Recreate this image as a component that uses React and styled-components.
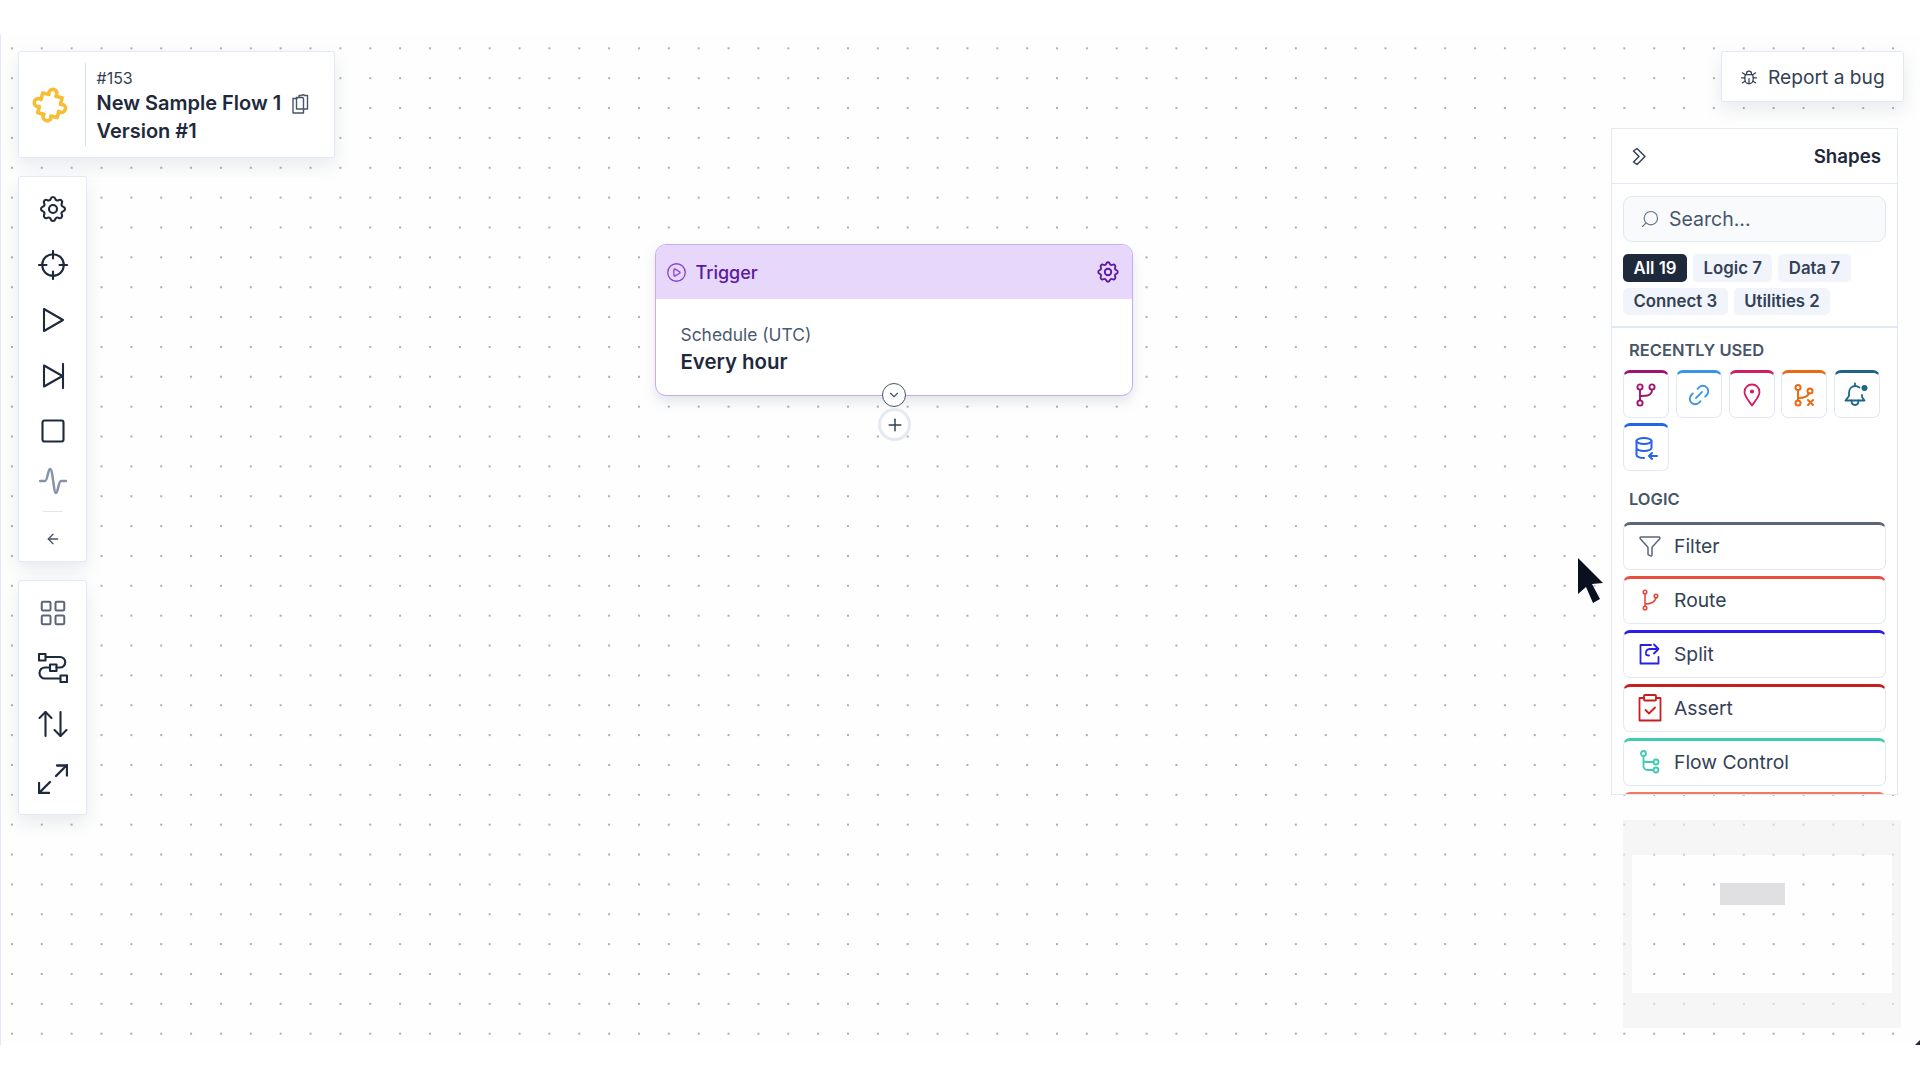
import React from "react";
import styled, { createGlobalStyle } from "styled-components";
import { ArrowLeft, LayoutGrid, ArrowUpDown, CirclePlay, ChevronDown, Plus, Search, Link2, Filter } from "lucide-react";
import { TbSettings, TbBug } from "react-icons/tb";

const Global = createGlobalStyle`
  html, body { margin: 0; padding: 0; background: #fff; width: 1920px; height: 1080px; overflow: hidden; }
  * { box-sizing: border-box; }
  body { font-family: "Inter", "Noto Sans", sans-serif; color: #1e293b; }
`;

const Canvas = styled.div`
  position: relative;
  margin-top: 34px;
  width: 1920px;
  height: 1011px;
  border-left: 1.5px solid #e2e8f5;
  background-color: #fefefe;
  background-image: radial-gradient(circle, #8f96a3 0.6px, transparent 1.05px);
  background-size: 29.87px 29.87px;
  background-position: -4px -0.6px;
  display: flex;
  justify-content: space-between;
  padding: 17px 16px 0 16.5px;
`;
const LeftColumn = styled.div`
  display: flex;
  flex-direction: column;
  align-items: flex-start;
  gap: 18px;
`;
const Card = styled.div`
  background: #fff;
  border: 1.5px solid #e2e8f5;
  border-radius: 3px;
  box-shadow: 0 8px 18px rgba(100, 116, 139, 0.14);
`;
const FlowCard = styled(Card)`
  width: 317px;
  height: 107px;
  display: flex;
  align-items: center;
  padding-left: 11px;
`;
const LogoSlot = styled.div`
  width: 56px;
  height: 83px;
  border-right: 1.5px solid #d5deec;
  display: flex;
  align-items: center;
`;
const FlowText = styled.div`
  margin: 2px 0 0 11px;
  display: flex;
  flex-direction: column;
`;
const FlowNumber = styled.div`
  font-size: 16px;
  line-height: 24px;
  color: #334155;
`;
const FlowName = styled.div`
  font-size: 20px;
  line-height: 27.5px;
  font-weight: 600;
  color: #1e293b;
  display: flex;
  align-items: center;
  gap: 11px;
`;
const Toolbar = styled(Card)`
  width: 69px;
  display: flex;
  flex-direction: column;
  align-items: center;
  padding: ${(p) => p.$pad};
`;
const Tool = styled.div`
  height: ${(p) => p.$h || 55.5}px;
  flex: none;
  display: flex;
  align-items: center;
  justify-content: center;
  color: ${(p) => p.$color || "#1e293b"};
`;
const ToolRule = styled.div`
  width: 20px;
  height: 1px;
  background: #e0e5ee;
  margin: 7px 0 11px;
`;

const RightColumn = styled.div`
  width: 290px;
  display: flex;
  flex-direction: column;
  align-items: flex-end;
`;
const BugButton = styled(Card)`
  width: 183px;
  height: 51px;
  display: flex;
  align-items: center;
  gap: 9.5px;
  padding-left: 16.5px;
  font-size: 19.2px;
  color: #334155;
`;
const Panel = styled.aside`
  margin-top: 26px;
  margin-right: 6px;
  width: 287px;
  height: 667px;
  background: #fff;
  border: 1.5px solid #e2e8f5;
  overflow: hidden;
`;
const PanelHead = styled.div`
  height: 55px;
  border-bottom: 1.5px solid #e2e8f5;
  display: flex;
  align-items: center;
  justify-content: space-between;
  padding: 0 16px 0 20px;
  font-size: 18.7px;
  font-weight: 600;
`;
const PanelSection = styled.div`
  padding: 12px 11px 0;
`;
const SearchBox = styled.div`
  height: 46px;
  width: 263px;
  border: 1.5px solid #e2e8f0;
  border-radius: 9px;
  background: #f8fafc;
  display: flex;
  align-items: center;
  gap: 9px;
  padding-left: 16px;
  font-size: 19.5px;
  color: #475569;
`;
const Chips = styled.div`
  display: flex;
  flex-wrap: wrap;
  gap: 6px;
  padding: 12px 0 11px;
`;
const Chip = styled.div`
  height: 27.5px;
  padding: 0 ${(p) => p.$pad}px;
  display: flex;
  align-items: center;
  border-radius: 5px;
  font-size: 16.8px;
  font-weight: 600;
  background: ${(p) => (p.$active ? "#1e293b" : "#f1f5fb")};
  color: ${(p) => (p.$active ? "#fff" : "#334155")};
`;
const Rule = styled.div`
  height: 1.5px;
  background: #e2e8f5;
`;
const SectionTitle = styled.div`
  font-size: 16.5px;
  font-weight: 600;
  color: #475569;
  padding-left: 6px;
  line-height: 20px;
`;
const Tiles = styled.div`
  display: flex;
  flex-wrap: wrap;
  gap: 5px 6.8px;
  margin-top: 10px;
  margin-bottom: 18.5px;
`;
const Tile = styled.div`
  width: 46px;
  height: 48px;
  border: 1.5px solid #e2e8f5;
  border-top: 3px solid ${(p) => p.$color};
  border-radius: 7px;
  color: ${(p) => p.$color};
  display: flex;
  align-items: center;
  justify-content: center;
`;
const ShapeList = styled.div`
  display: flex;
  flex-direction: column;
  gap: 6px;
  margin-top: 12.5px;
`;
const ShapeRow = styled.div`
  height: 48px;
  flex: none;
  border: 1.5px solid #e2e8f5;
  border-top: 3px solid ${(p) => p.$color};
  border-radius: 7px;
  display: flex;
  align-items: center;
  gap: 12px;
  padding: 0 0 2px 14px;
  font-size: 19.3px;
  color: #334155;
`;
const ShapeIcon = styled.span`
  width: 24px;
  height: 24px;
  display: flex;
  align-items: center;
  justify-content: center;
  color: ${(p) => p.$color};
`;
const MiniMap = styled.div`
  margin-top: 25px;
  margin-right: 3px;
  width: 278px;
  height: 208px;
  border-style: solid;
  border-width: 35px 9px 35px 9px;
  border-color: rgba(240, 240, 240, 0.62);
  display: flex;
  padding: 28px 0 0 88px;
`;
const MiniNode = styled.div`
  width: 65px;
  height: 22px;
  background: #e0e0e3;
`;
const Node = styled.div`
  position: absolute;
  left: 654px;
  top: 210px;
  width: 477.5px;
  height: 152px;
  background: #fff;
  border: 1.5px solid #c9a9f2;
  border-radius: 11px;
  box-shadow: 0 6px 12px rgba(100, 116, 139, 0.18);
`;
const NodeHead = styled.div`
  height: 54px;
  background: #e6d7fb;
  border-radius: 10px 10px 0 0;
  display: flex;
  align-items: center;
  padding: 0 11px 0 9.5px;
  color: #5b1a9e;
  font-size: 18px;
  font-weight: 500;
  gap: 9px;
`;
const NodeTitle = styled.span`
  flex: 1;
`;
const NodeBody = styled.div`
  padding: 23px 0 0 24.5px;
`;
const NodeLabel = styled.div`
  font-size: 17.4px;
  line-height: 26px;
  color: #4b5a70;
`;
const NodeValue = styled.div`
  font-size: 20.4px;
  line-height: 28px;
  font-weight: 600;
  color: #1e293b;
`;
const Collapse = styled.div`
  position: absolute;
  left: 226px;
  top: 137.5px;
  width: 24px;
  height: 24px;
  border-radius: 50%;
  background: #fff;
  border: 1.5px solid #475569;
  display: flex;
  align-items: center;
  justify-content: center;
  color: #475569;
`;
const AddButton = styled.div`
  position: absolute;
  left: 222px;
  top: 163px;
  width: 33px;
  height: 33px;
  border-radius: 50%;
  background: #fff;
  border: 3px solid #e7e9f1;
  display: flex;
  align-items: center;
  justify-content: center;
  color: #334155;
`;
const Pointer = styled.svg`
  position: absolute;
  left: 1575.5px;
  top: 524px;
`;
const Corner = styled.div`
  position: absolute;
  right: 0;
  bottom: 0;
  width: 5px;
  height: 5px;
  background: #1e293b;
  clip-path: polygon(100% 0, 100% 100%, 0 100%);
`;

const Icon = ({ w, h, sw = 2.1, color = "currentColor", children }) => (
  <svg width={w} height={h} viewBox={`0 0 ${w} ${h}`} fill="none" stroke={color} strokeWidth={sw} strokeLinecap="round" strokeLinejoin="round">
    {children}
  </svg>
);

const Puzzle = () => (
  <svg width="40" height="40" viewBox="0 0 40 40" fill="none" stroke="#f7bd35" strokeWidth="3.6" strokeLinejoin="round">
    <g transform="rotate(14 20 20)">
      <path d="M10 10h6.500c-1.500-3 .5-6 3.500-6s5 3 3.500 6H30v7c3-1.500 6 .5 6 3.500s-3 5-6 3.500v6.500h-6.500c1.500 3-.5 5.500-3.500 5.500s-5-2.500-3.500-5.500H10v-6.500c-3 1.500-6-.5-6-3.500s3-5 6-3.500z" />
    </g>
  </svg>
);
const CopyIcon = () => (
  <Icon w={17} h={20} sw={1.4} color="#475569">
    <path d="M5 4.500H1v14.500h10.500v-4" />
    <path d="M7 3.500V1.500h2.500a2 2 0 0 1 3 0h3v13.500h-4" />
    <path d="M4.500 6.500V3.500h6c.8 0 1 .5 1 1v10.500H4.500z" />
  </Icon>
);
const CrosshairIcon = () => (
  <Icon w={30} h={30}>
    <circle cx="15" cy="15" r="10.800" />
    <path d="M15 1v7.500M15 21.500V29M1 15h7.500M21.500 15H29" />
  </Icon>
);
const PlayIcon = () => (
  <Icon w={24} h={26}>
    <path d="M3 2l19 11L3 24z" />
  </Icon>
);
const SkipIcon = () => (
  <Icon w={24} h={26}>
    <path d="M3 2.500L21.500 13 3 23.500zM22 1v24" />
  </Icon>
);
const SquareIcon = () => (
  <Icon w={24} h={24}>
    <rect x="1.500" y="1.500" width="21" height="21" rx="2" />
  </Icon>
);
const ActivityIcon = () => (
  <Icon w={28} h={28} sw={2.5}>
    <path d="M1 14h5c2.500 0 3-12 5-12 3 0 3.500 24 6 24 2 0 2.500-12 5-12h5" />
  </Icon>
);
const RouteMapIcon = () => (
  <Icon w={30} h={30}>
    <rect x="1" y="1" width="6.500" height="6.500" />
    <rect x="12" y="11.500" width="6.500" height="6.500" />
    <rect x="22.500" y="22.500" width="6.500" height="6.500" />
    <path d="M8 4h14a5 5 0 0 1 0 10.500h-3.500M12 14.500H7a5.500 5.500 0 0 0 0 11h15" />
  </Icon>
);
const ResizeIcon = () => (
  <Icon w={30} h={30} sw={2.3}>
    <path d="M18 12L29 1M19 1.500h10v10M12 18L1 29M1 19v10h10" />
  </Icon>
);
const CollapseChevrons = () => (
  <Icon w={14} h={19} sw={1.5} color="#334155">
    <path d="M5 1.500l8 8-8 8-3.500-2.500L7 9.500 1.500 4z" />
  </Icon>
);
const ForkIcon = ({ color }) => (
  <Icon w={24} h={24} color={color} sw={1.9}>
    <circle cx="6" cy="4" r="2.600" /><circle cx="18" cy="4" r="2.600" /><circle cx="6" cy="20" r="2.600" />
    <path d="M6 6.600v10.800M18 6.600c0 6.400-5 6.400-12 6.400" />
  </Icon>
);
const PinIcon = ({ color }) => (
  <Icon w={20} h={24} color={color} sw={1.8}>
    <path d="M10 22.500C7 18 2.500 13.500 2.500 9a7.500 7.500 0 0 1 15 0c0 4.500-4.500 9-7.500 13.500z" />
    <circle cx="10" cy="8.500" r="1.200" fill={color} />
  </Icon>
);
const ForkX = ({ color }) => (
  <Icon w={24} h={24} color={color} sw={2}>
    <circle cx="6" cy="4.500" r="2.500" /><circle cx="6" cy="20" r="2.500" /><circle cx="18" cy="8" r="2.500" />
    <path d="M6 7v10.500M6 15c6 0 10-1 11-5M16 17l5 5M21 17l-5 5" />
  </Icon>
);
const BellMark = ({ color }) => (
  <Icon w={26} h={26} color={color} sw={1.8}>
    <path d="M11 1.500v2.500M15.500 5.500C14 4.500 12.500 4 11 4 7 4 5 7.500 5 11v3l-3.500 4.500h19L18 15v-2" />
    <path d="M7.500 18.500c0 6 7 6 7 0" />
    <circle cx="20.500" cy="6" r="3" fill={color} stroke="none" />
  </Icon>
);
const DbIn = ({ color }) => (
  <Icon w={24} h={24} color={color} sw={2}>
    <ellipse cx="10" cy="5" rx="7.500" ry="3" />
    <path d="M2.500 5v14c0 1.500 3 3 7.500 3M17.500 5v7M2.500 12c0 1.700 3.500 3 7.500 3s7.500-1.300 7.500-3M23 20h-8M18 17l-3 3 3 3" />
  </Icon>
);
const RouteIcon = ({ color }) => (
  <Icon w={18} h={22} color={color} sw={1.5}>
    <circle cx="4" cy="3" r="1.800" /><circle cx="4" cy="19" r="1.800" /><circle cx="15" cy="7" r="1.800" />
    <path d="M4 5v12M4 15c6 0 10-2 11-6" />
  </Icon>
);
const SplitIcon = ({ color }) => (
  <Icon w={22} h={22} color={color} sw={1.8}>
    <path d="M12 2H1.500v18.500h18V14M15 1.500l4.500 4.500-4.500 4.500M19 6h-8c-3 0-4.500 2-4 5 .2 1 1 1.500 3 1.500" />
  </Icon>
);
const AssertIcon = ({ color }) => (
  <Icon w={24} h={28} color={color} sw={1.8}>
    <path d="M6 4H1.500v22.500h21V4H18" /><rect x="6" y="1" width="12" height="5.500" rx="1" />
    <path d="M7.500 16l3.500 3.500 6-6" />
  </Icon>
);
const FlowControlIcon = ({ color }) => (
  <Icon w={20} h={24} color={color} sw={1.8}>
    <circle cx="3.500" cy="3.500" r="2.500" /><circle cx="16" cy="12" r="2.500" /><circle cx="16" cy="20" r="2.500" />
    <path d="M3.500 6v10c0 2.500 2 4 4 4h6M3.500 10c0 1.500 1.500 2 3 2h7" />
  </Icon>
);

const recent = [
  ["#a0146e", <ForkIcon color="#a0146e" />],
  ["#3b94e8", <Link2 size={26} strokeWidth={1.7} style={{ transform: "rotate(-45deg)" }} />],
  ["#cf1f63", <PinIcon color="#cf1f63" />],
  ["#ea6a13", <ForkX color="#ea6a13" />],
  ["#1d6585", <BellMark color="#1d6585" />],
  ["#2563eb", <DbIn color="#2563eb" />],
];
const shapes = [
  ["Filter", "#5b6579", <Filter size={24} strokeWidth={1.5} />],
  ["Route", "#ea4f3e", <RouteIcon color="#e2453a" />],
  ["Split", "#2a1ee8", <SplitIcon color="#2a1ee8" />],
  ["Assert", "#c81e1e", <AssertIcon color="#c81e1e" />],
  ["Flow Control", "#3fcbb0", <FlowControlIcon color="#3fcbb0" />],
  ["", "#ef7c5d", null],
];

export default function App() {
  return (
    <>
      <Global />
      <Canvas>
        <LeftColumn>
          <FlowCard>
            <LogoSlot><Puzzle /></LogoSlot>
            <FlowText>
              <FlowNumber>#153</FlowNumber>
              <FlowName>New Sample Flow 1 <CopyIcon /></FlowName>
              <FlowName>Version #1</FlowName>
            </FlowText>
          </FlowCard>
          <Toolbar $pad="4.5px 0 6.500px 1px">
            <Tool><TbSettings size={32} strokeWidth={1.6} /></Tool>
            <Tool><CrosshairIcon /></Tool>
            <Tool><PlayIcon /></Tool>
            <Tool><SkipIcon /></Tool>
            <Tool><SquareIcon /></Tool>
            <Tool $h={44.5} $color="#8493a8"><ActivityIcon /></Tool>
            <ToolRule />
            <Tool $h={32} $color="#475569"><ArrowLeft size={16} strokeWidth={2} /></Tool>
          </Toolbar>
          <Toolbar $pad="4px 0 7px 1px">
            <Tool $color="#5b6579"><LayoutGrid size={30} strokeWidth={1.6} /></Tool>
            <Tool><RouteMapIcon /></Tool>
            <Tool><ArrowUpDown size={36} strokeWidth={1.4} /></Tool>
            <Tool><ResizeIcon /></Tool>
          </Toolbar>
        </LeftColumn>
        <RightColumn>
          <BugButton><TbBug size={20} strokeWidth={1.5} />Report a bug</BugButton>
          <Panel>
            <PanelHead><CollapseChevrons />Shapes</PanelHead>
            <PanelSection>
              <SearchBox><Search size={20} strokeWidth={1.4} color="#64748b" style={{ transform: "scaleX(-1)" }} />Search...</SearchBox>
              <Chips>
                <Chip $active $pad={10.5}>All 19</Chip>
                <Chip $pad={10.5}>Logic 7</Chip>
                <Chip $pad={10.5}>Data 7</Chip>
                <Chip $pad={10.5}>Connect 3</Chip>
                <Chip $pad={10.5}>Utilities 2</Chip>
              </Chips>
            </PanelSection>
            <Rule />
            <PanelSection>
              <SectionTitle>RECENTLY USED</SectionTitle>
              <Tiles>
                {recent.map(([c, icon], i) => <Tile key={i} $color={c}>{icon}</Tile>)}
              </Tiles>
              <SectionTitle>LOGIC</SectionTitle>
              <ShapeList>
                {shapes.map(([name, c, icon], i) => (
                  <ShapeRow key={i} $color={c}><ShapeIcon $color={c}>{icon}</ShapeIcon>{name}</ShapeRow>
                ))}
              </ShapeList>
            </PanelSection>
          </Panel>
          <MiniMap><MiniNode /></MiniMap>
        </RightColumn>
        <Node>
          <NodeHead>
            <CirclePlay size={21} strokeWidth={1.5} color="#8b3fd6" />
            <NodeTitle>Trigger</NodeTitle>
            <TbSettings size={26} strokeWidth={1.7} />
          </NodeHead>
          <NodeBody>
            <NodeLabel>Schedule (UTC)</NodeLabel>
            <NodeValue>Every hour</NodeValue>
          </NodeBody>
          <Collapse><ChevronDown size={14} strokeWidth={2} /></Collapse>
          <AddButton><Plus size={20} strokeWidth={1.8} /></AddButton>
        </Node>
        <Pointer width="28" height="46" viewBox="0 0 28 46">
          <path d="M1 0 L26 25 L15 26 L23 41 L16 45 L9 29 L1 36 Z" fill="#0b1020" />
        </Pointer>
        <Corner />
      </Canvas>
    </>
  );
}
